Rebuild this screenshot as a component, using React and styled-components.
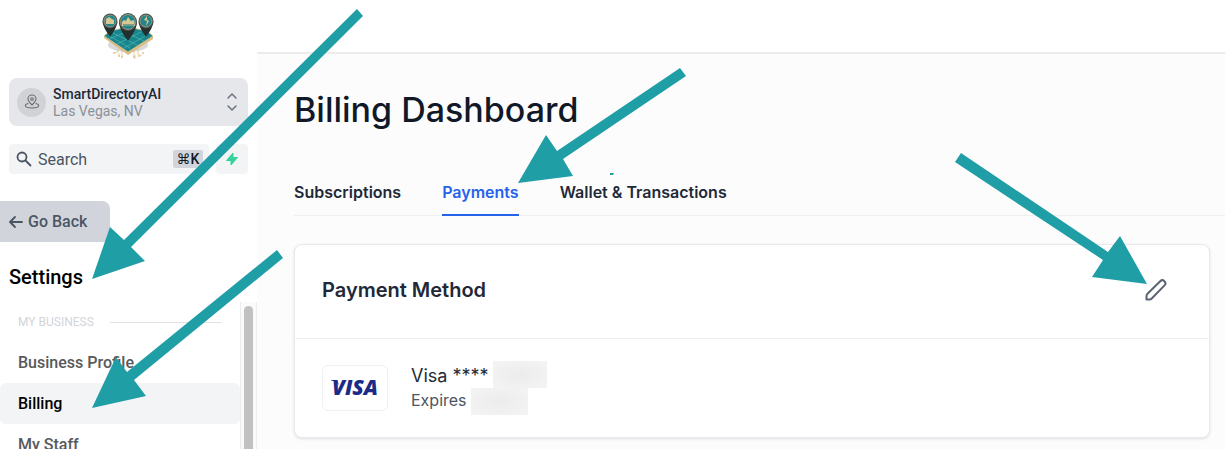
import React, { useState } from 'react';
import styled, { createGlobalStyle } from 'styled-components';

const GlobalStyle = createGlobalStyle`
  *, *::before, *::after {
    box-sizing: border-box;
  }
  body {
    margin: 0;
    background: #fcfcfd;
    font-family: Roboto, sans-serif;
  }
  button, input {
    font: inherit;
  }
`;

const Page = styled.div`
  position: relative;
  display: grid;
  grid-template-columns: 257px 1fr;
  height: 100vh;
  overflow: hidden;
`;

const Sidebar = styled.aside`
  display: flex;
  flex-direction: column;
  min-height: 0;
  background: #fff;
`;

const LogoBox = styled.div`
  display: flex;
  flex-shrink: 0;
  justify-content: center;
  padding: 10px 1px 18px 0;
`;

const LocationButton = styled.button`
  display: flex;
  align-items: center;
  gap: 7px;
  flex-shrink: 0;
  height: 48px;
  margin: 0 9px;
  padding: 0 10px 0 8px;
  border: none;
  border-radius: 8px;
  background: #e5e7eb;
  text-align: left;
  cursor: pointer;
`;

const LocationIcon = styled.span`
  display: flex;
  align-items: center;
  justify-content: center;
  width: 29px;
  height: 29px;
  border-radius: 50%;
  background: #d1d2d5;
`;

const LocationText = styled.span`
  flex: 1;
  display: flex;
  flex-direction: column;
  padding-top: 2px;
  font-size: 14px;
  line-height: 17px;
  color: #8b9099;
`;

const LocationName = styled.span`
  font-weight: 500;
  color: #1f2937;
`;

const SearchRow = styled.div`
  display: flex;
  gap: 7px;
  flex-shrink: 0;
  height: 30px;
  margin: 18px 9px 0;
`;

const SearchBox = styled.label`
  flex: 1;
  display: flex;
  align-items: center;
  gap: 6px;
  min-width: 0;
  padding: 0 6px 0 7px;
  border-radius: 4px;
  background: #f3f4f6;
`;

const SearchInput = styled.input`
  flex: 1;
  min-width: 0;
  padding: 0;
  border: none;
  outline: none;
  background: transparent;
  font-size: 16px;
  color: #4b5563;
  &::placeholder {
    color: #4b5563;
    opacity: 1;
  }
`;

const Shortcut = styled.kbd`
  width: 30px;
  border-radius: 2px;
  background: #d1d5db;
  font-family: Roboto, 'DejaVu Sans', sans-serif;
  font-size: 14px;
  font-weight: 500;
  line-height: 18px;
  text-align: center;
  color: #111827;
`;

const BoltButton = styled.button`
  display: flex;
  align-items: center;
  justify-content: center;
  width: 32px;
  padding: 0;
  border: none;
  border-radius: 4px;
  background: #f3f4f6;
  cursor: pointer;
`;

const BackButton = styled.button`
  display: flex;
  align-items: center;
  align-self: flex-start;
  gap: 4px;
  flex-shrink: 0;
  width: 110px;
  height: 41px;
  margin-top: 27px;
  padding: 0 0 0 8px;
  border: none;
  border-radius: 0 8px 0 0;
  background: #d1d5db;
  font-size: 16px;
  font-weight: 500;
  color: #4b5563;
  cursor: pointer;
`;

const SettingsTitle = styled.h2`
  margin: 23px 9px 13px;
  font-size: 20px;
  font-weight: 500;
  line-height: 24px;
  color: #000;
`;

const NavScroller = styled.div`
  flex: 1;
  display: flex;
  min-height: 0;
`;

const Nav = styled.nav`
  flex: 1;
  overflow: hidden;
`;

const NavHeading = styled.div`
  display: flex;
  align-items: center;
  gap: 16px;
  height: 40px;
  padding: 0 18px;
  font-size: 12px;
  color: #d1d5db;
  &::after {
    content: '';
    flex: 1;
    height: 1px;
    background: #e0e2e6;
  }
`;

const NavLink = styled.a`
  display: block;
  padding: 0 18px;
  border-radius: 6px;
  background: ${({ $active }) => ($active ? '#f3f4f6' : 'transparent')};
  font-size: 16px;
  font-weight: 500;
  line-height: 41px;
  color: ${({ $active }) => ($active ? '#000' : '#58595c')};
  text-decoration: none;
`;

const ScrollTrack = styled.div`
  display: flex;
  justify-content: center;
  width: 17px;
  padding-top: 4px;
  border: solid #ececec;
  border-width: 0 1px;
  background: #fafafa;
`;

const ScrollThumb = styled.div`
  width: 9px;
  height: 240px;
  border-radius: 5px;
  background: #c1c1c1;
`;

const Main = styled.main`
  min-width: 0;
  font-family: Inter, sans-serif;
  color: #111827;
`;

const TopBar = styled.header`
  height: 54px;
  border-bottom: 2px solid #ececec;
  background: #fff;
`;

const Content = styled.div`
  padding: 35px 0 0 37px;
`;

const Title = styled.h1`
  margin: 0;
  font-size: 34px;
  font-weight: 500;
  line-height: 42px;
`;

const Tabs = styled.div`
  display: flex;
  gap: 41px;
  margin-top: 38px;
  border-bottom: 1px solid #eeeff1;
`;

const Tab = styled.button`
  height: 47px;
  margin-bottom: -1px;
  padding: 0;
  border: none;
  border-bottom: 2px solid ${({ $active }) => ($active ? '#2563eb' : 'transparent')};
  background: none;
  font-size: 16px;
  font-weight: 600;
  color: ${({ $active }) => ($active ? '#2563eb' : '#1f2937')};
  cursor: pointer;
`;

const Card = styled.section`
  margin: 28px 15px 0 0;
  border: 1px solid #e9eaee;
  border-radius: 8px;
  background: #fff;
  box-shadow: 0 1px 3px rgba(16, 24, 40, 0.12);
`;

const CardHeader = styled.div`
  display: flex;
  align-items: center;
  justify-content: space-between;
  height: 94px;
  padding: 0 42px 4px 27px;
  border-bottom: 1px solid #eeeff2;
`;

const CardTitle = styled.h3`
  margin: 0;
  font-size: 20px;
  font-weight: 600;
  color: #1f2937;
`;

const EditButton = styled.button`
  display: flex;
  padding: 0;
  border: none;
  background: none;
  cursor: pointer;
`;

const CardBody = styled.div`
  display: flex;
  align-items: center;
  gap: 23px;
  height: 98px;
  padding: 0 27px;
`;

const VisaBadge = styled.div`
  display: flex;
  align-items: center;
  justify-content: center;
  width: 66px;
  height: 46px;
  border: 1px solid #f0f1f3;
  border-radius: 6px;
`;

const CardLine = styled.div`
  display: flex;
  align-items: flex-start;
  gap: 4px;
  height: 27px;
  font-size: ${({ $small }) => ($small ? '16px' : '18px')};
  line-height: ${({ $small }) => ($small ? '25px' : '29px')};
  color: ${({ $small }) => ($small ? '#4b5563' : '#1f2937')};
`;

const Redacted = styled.span`
  width: ${({ $wide }) => ($wide ? '54px' : '57px')};
  height: 27px;
  background: radial-gradient(ellipse, #ececec, #f4f4f4);
`;

const Annotations = styled.svg`
  position: absolute;
  top: 0;
  left: 0;
  pointer-events: none;
`;

const arrows = [
  '92,279 110,227 124,240 357,9 363,16 131,247 145,261',
  '92,408 116,357 127,372 277,250 283,258 134,380 146,396',
  '518,183 546,135 557,151 680,68 686,76 563,159 573,176',
  '1147,284 1092,277 1103,260 955,162 961,153 1108,252 1120,236',
];

const navItems = ['Business Profile', 'Billing', 'My Staff'];
const tabs = ['Subscriptions', 'Payments', 'Wallet & Transactions'];

const LogoPin = ({ x, y, r, children }) => (
  <g transform={`translate(${x} ${y})`}>
    <path d={`M${-r} 1 Q${-r + 1} ${r} 0 ${r * 2.1} Q${r - 1} ${r} ${r} 1Z`} fill="#22302f" />
    <circle r={r} fill="#4a4f49" />
    <circle r={r - 1.5} fill="#24858a" stroke="#b9a98a" strokeWidth="0.7" />
    {children}
  </g>
);

const Logo = () => (
  <svg width="54" height="50" viewBox="0 0 54 50" role="img" aria-label="Smart Directory">
    <ellipse cx="27" cy="35" rx="20" ry="7" fill="#000" opacity="0.15" />
    <path d="M3 26 27 41 52 26v3L27 45 3 28Z" fill="#d9bd84" />
    <path d="M9 21 27 17 46 21 52 26 27 42 3 26Z" fill="#19858d" stroke="#e0c48e" strokeWidth="0.8" />
    <path d="m8 29 22-9m-14 14 24-12M23 38l23-13M12 23l24 12M22 21l21 10M7 25l22 13" fill="none" stroke="#4db8b2" strokeWidth="0.7" />
    <path d="M17 38v4l-4 1m8-3v7m-3-4v3m15-5v6m4-9v6l4 2m-7-1v4" fill="none" stroke="#dfba7d" strokeWidth="0.7" />
    <g fill="#e0c48e">
      <circle cx="13" cy="43" r="1" />
      <circle cx="18" cy="46" r="1" />
      <circle cx="21" cy="47" r="1" />
      <circle cx="33" cy="47" r="1" />
      <circle cx="38" cy="46" r="1" />
      <circle cx="42" cy="43" r="1" />
    </g>
    <LogoPin x="9" y="11" r="7.5">
      <path d="M-4 3v-5l3-2 3 2 2 1v4Z" fill="#d8c793" />
    </LogoPin>
    <LogoPin x="45" y="11" r="7.5">
      <path d="M1-5-2-1l3 1-1 5 3-5-2-1Z" fill="#d8c793" />
    </LogoPin>
    <LogoPin x="27" y="12" r="9">
      <path d="M-6 4v-4l2-2 2 1 2-4 3 4 3-1 1 6Z" fill="#d8c793" />
      <path d="M-5 3H6" stroke="#19777f" />
    </LogoPin>
  </svg>
);

const VisaLogo = () => (
  <svg width="50" height="22" viewBox="0 0 50 22" fill="#1a2b88" role="img" aria-label="Visa">
    <path d="M1 3.500V3h6l2 5c-2-2.500-5-4-8-4.500Z" />
    <text x="25" y="18" textAnchor="middle" fontFamily="'Open Sans', sans-serif" fontSize="21" fontStyle="italic" fontWeight="800">
      VISA
    </text>
  </svg>
);

const App = () => {
  const [activeNav, setActiveNav] = useState('Billing');
  const [activeTab, setActiveTab] = useState('Payments');

  return (
    <Page>
      <GlobalStyle />
      <Sidebar>
        <LogoBox>
          <Logo />
        </LogoBox>
        <LocationButton type="button">
          <LocationIcon>
            <svg width="16" height="16" viewBox="0 0 16 16" fill="none" stroke="#6b6e73" strokeWidth="1.1" strokeLinecap="round" strokeLinejoin="round">
              <path d="M8 11C5.500 8.500 4 7 4 5a4 4 0 0 1 8 0c0 2-1.500 3.500-4 6Z" />
              <circle cx="8" cy="5" r="1.3" />
              <path d="M4 9.500c-1.700.4-2.700 1-2.700 2 0 1.500 3 2.500 6.700 2.500s6.700-1 6.700-2.500c0-1-1-1.600-2.700-2" />
            </svg>
          </LocationIcon>
          <LocationText>
            <LocationName>SmartDirectoryAI</LocationName>
            Las Vegas, NV
          </LocationText>
          <svg width="12" height="20" viewBox="0 0 12 20" fill="none" stroke="#6b7280" strokeWidth="1.5" strokeLinecap="round" strokeLinejoin="round">
            <path d="m2 6 4-4 4 4M2 14l4 4 4-4" />
          </svg>
        </LocationButton>
        <SearchRow>
          <SearchBox>
            <svg width="16" height="16" viewBox="0 0 16 16" fill="none" stroke="#4b5563" strokeWidth="1.8" strokeLinecap="round">
              <circle cx="6" cy="6" r="4.5" />
              <path d="m9.500 9.500 5 5" />
            </svg>
            <SearchInput type="text" placeholder="Search" aria-label="Search" />
            <Shortcut>⌘K</Shortcut>
          </SearchBox>
          <BoltButton type="button" aria-label="Quick actions">
            <svg width="14" height="16" viewBox="0 0 14 16">
              <path d="M8 2v4.500h4.500L6 14V9.500H1.500Z" fill="#34d399" stroke="#34d399" strokeLinejoin="round" />
            </svg>
          </BoltButton>
        </SearchRow>
        <BackButton type="button">
          <svg width="16" height="14" viewBox="0 0 16 14" fill="none" stroke="#4b5563" strokeWidth="1.8" strokeLinecap="round" strokeLinejoin="round">
            <path d="M14 7H2m5-5L2 7l5 5" />
          </svg>
          Go Back
        </BackButton>
        <SettingsTitle>Settings</SettingsTitle>
        <NavScroller>
          <Nav>
            <NavHeading>MY BUSINESS</NavHeading>
            {navItems.map(item => (
              <NavLink key={item} href="#" $active={item === activeNav} onClick={() => setActiveNav(item)}>
                {item}
              </NavLink>
            ))}
          </Nav>
          <ScrollTrack>
            <ScrollThumb />
          </ScrollTrack>
        </NavScroller>
      </Sidebar>

      <Main>
        <TopBar />
        <Content>
          <Title>Billing Dashboard</Title>
          <Tabs role="tablist">
            {tabs.map(tab => (
              <Tab key={tab} type="button" role="tab" aria-selected={tab === activeTab} $active={tab === activeTab} onClick={() => setActiveTab(tab)}>
                {tab}
              </Tab>
            ))}
          </Tabs>
          <Card>
            <CardHeader>
              <CardTitle>Payment Method</CardTitle>
              <EditButton type="button" aria-label="Edit payment method">
                <svg width="22" height="22" viewBox="0 0 22 22" fill="none" stroke="#5b6474" strokeWidth="2" strokeLinecap="round" strokeLinejoin="round">
                  <path d="M1.500 20.500v-3.300c0-1 .3-1.700 1-2.400L15.200 2.200c2.800-2.800 7 1.300 4.300 4.200L7 19.200c-.8.800-1.500 1.300-2.600 1.300Z" />
                </svg>
              </EditButton>
            </CardHeader>
            <CardBody>
              <VisaBadge>
                <VisaLogo />
              </VisaBadge>
              <div>
                <CardLine>Visa **** <Redacted $wide /></CardLine>
                <CardLine $small>Expires <Redacted /></CardLine>
              </div>
            </CardBody>
          </Card>
        </Content>
      </Main>

      <Annotations width="1225" height="449" viewBox="0 0 1225 449" fill="#209ea6" aria-hidden="true">
        {arrows.map(points => (
          <polygon key={points} points={points} />
        ))}
        <path d="M610 173h4l-1 2h-3Z" />
      </Annotations>
    </Page>
  );
};

export default App;
